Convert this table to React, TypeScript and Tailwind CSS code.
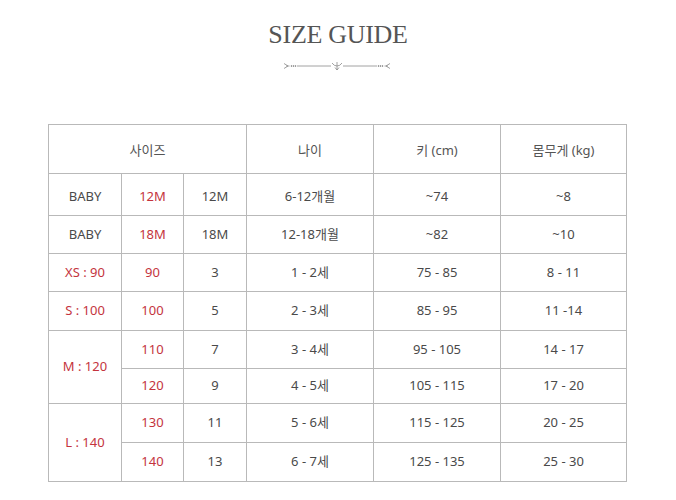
import React from "react";

const RED = "text-[#c4343d]";

function Ornament() {
  return (
    <svg width="108" height="10" viewBox="0 0 108 10" className="block">
      <g stroke="#8a8a8a" strokeWidth="0.8" fill="none">
        <path d="M1 2.5 L5 5 L1 7.5" />
        <path d="M3 5 H6.5" />
        <circle cx="8.5" cy="5" r="0.5" fill="#8a8a8a" />
        <circle cx="10.5" cy="5" r="0.5" fill="#8a8a8a" />
        <circle cx="12.5" cy="5" r="0.5" fill="#8a8a8a" />
        <path d="M14 5 H48" />
        <path d="M49 2 Q51 5 54 5 Q57 5 59 2" />
        <path d="M54 1 V9" />
        <path d="M52 6.5 L54 9 L56 6.5" />
        <path d="M60 5 H94" />
        <circle cx="95.5" cy="5" r="0.5" fill="#8a8a8a" />
        <circle cx="97.5" cy="5" r="0.5" fill="#8a8a8a" />
        <circle cx="99.5" cy="5" r="0.5" fill="#8a8a8a" />
        <path d="M101.5 5 H105" />
        <path d="M107 2.5 L103 5 L107 7.5" />
      </g>
    </svg>
  );
}

type Row = {
  a?: { text: string; red?: boolean; span?: number };
  b: string;
  c: string;
  age: string;
  h: string;
  w: string;
  height: string;
  pad?: string;
};

const rows: Row[] = [
  { a: { text: "BABY" }, b: "12M", c: "12M", age: "6-12개월", h: "~74", w: "~8", height: "h-[42px]", pad: "pt-[4px]" },
  { a: { text: "BABY" }, b: "18M", c: "18M", age: "12-18개월", h: "~82", w: "~10", height: "h-[38px]" },
  { a: { text: "XS : 90", red: true }, b: "90", c: "3", age: "1 - 2세", h: "75 - 85", w: "8 - 11", height: "h-[38px]" },
  { a: { text: "S : 100", red: true }, b: "100", c: "5", age: "2 - 3세", h: "85 - 95", w: "11 -14", height: "h-[39px]" },
  { a: { text: "M : 120", red: true, span: 2 }, b: "110", c: "7", age: "3 - 4세", h: "95 - 105", w: "14 - 17", height: "h-[38px]" },
  { b: "120", c: "9", age: "4 - 5세", h: "105 - 115", w: "17 - 20", height: "h-[35px]" },
  { a: { text: "L : 140", red: true, span: 2 }, b: "130", c: "11", age: "5 - 6세", h: "115 - 125", w: "20 - 25", height: "h-[39px]" },
  { b: "140", c: "13", age: "6 - 7세", h: "125 - 135", w: "25 - 30", height: "h-[39px]" },
];

const cell = "border border-[#b9b9b9] text-center align-middle p-0";

export default function App() {
  return (
    <div
      className="w-[676px] h-[500px] bg-white overflow-hidden"
      style={{ fontFamily: '"Noto Sans", "Noto Sans CJK KR", sans-serif' }}
    >
      <div className="flex flex-col items-center pt-[20px]">
        <h1
          className="text-[26px] leading-[30px] text-[#555555] tracking-[-0.3px]"
          style={{ fontFamily: '"Liberation Serif", "Times New Roman", serif' }}
        >
          SIZE GUIDE
        </h1>
        <div className="mt-[11px] ml-[-2px]">
          <Ornament />
        </div>
      </div>
      <div className="pl-[48px] pt-[53px]">
        <table className="border-collapse table-fixed w-[578px] text-[13px] text-[#4a4a4a]">
          <colgroup>
            <col className="w-[73px]" />
            <col className="w-[62px]" />
            <col className="w-[63px]" />
            <col className="w-[127px]" />
            <col className="w-[127px]" />
            <col className="w-[126px]" />
          </colgroup>
          <thead>
            <tr className="h-[49px]">
              <th colSpan={3} className={`${cell} font-normal text-[#555] pt-[3px]`}>사이즈</th>
              <th className={`${cell} font-normal text-[#555] pt-[3px]`}>나이</th>
              <th className={`${cell} font-normal text-[#555] pt-[3px]`}>키 (cm)</th>
              <th className={`${cell} font-normal text-[#555] pt-[3px]`}>몸무게 (kg)</th>
            </tr>
          </thead>
          <tbody>
            {rows.map((r, i) => (
              <tr key={i} className={r.height}>
                {r.a && (
                  <td rowSpan={r.a.span ?? 1} className={`${cell} ${r.pad ?? ""} ${r.a.red ? RED : ""}`}>
                    {r.a.text}
                  </td>
                )}
                <td className={`${cell} ${r.pad ?? ""} ${RED}`}>{r.b}</td>
                <td className={`${cell} ${r.pad ?? ""}`}>{r.c}</td>
                <td className={`${cell} ${r.pad ?? ""}`}>{r.age}</td>
                <td className={`${cell} ${r.pad ?? ""}`}>{r.h}</td>
                <td className={`${cell} ${r.pad ?? ""}`}>{r.w}</td>
              </tr>
            ))}
          </tbody>
        </table>
      </div>
    </div>
  );
}
